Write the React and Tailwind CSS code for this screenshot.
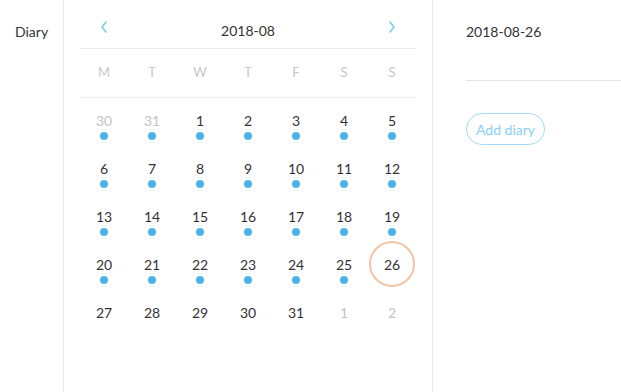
import React from 'react';

const weeks = [
  [['30', 1, 1], ['31', 1, 1], ['1', 0, 1], ['2', 0, 1], ['3', 0, 1], ['4', 0, 1], ['5', 0, 1]],
  [['6', 0, 1], ['7', 0, 1], ['8', 0, 1], ['9', 0, 1], ['10', 0, 1], ['11', 0, 1], ['12', 0, 1]],
  [['13', 0, 1], ['14', 0, 1], ['15', 0, 1], ['16', 0, 1], ['17', 0, 1], ['18', 0, 1], ['19', 0, 1]],
  [['20', 0, 1], ['21', 0, 1], ['22', 0, 1], ['23', 0, 1], ['24', 0, 1], ['25', 0, 1], ['26', 0, 0]],
  [['27', 0, 0], ['28', 0, 0], ['29', 0, 0], ['30', 0, 0], ['31', 0, 0], ['1', 1, 0], ['2', 1, 0]],
];

function Chevron({ dir }) {
  return (
    <svg width="10" height="14" viewBox="0 0 10 14" fill="none">
      <path d={dir === 'left' ? 'M7 2 L3 7 L7 12' : 'M3 2 L7 7 L3 12'} stroke="#7cc8f2" strokeWidth="1.6" strokeLinecap="round" strokeLinejoin="round" />
    </svg>
  );
}

export default function App() {
  return (
    <div className="flex w-[621px] h-[392px] bg-white text-[14px] text-[#333]" style={{ fontFamily: 'Lato, "Noto Sans", sans-serif' }}>
      <div className="w-[64px] shrink-0 border-r border-[#e8e8e8] pl-[15px] pt-[21px]">Diary</div>

      <div className="w-[369px] shrink-0 border-r border-[#e8e8e8] px-[16px]">
        <div className="flex items-center h-[49px] border-b border-[#ececec]">
          <div className="w-[48px] flex justify-center pt-[6px]"><Chevron dir="left" /></div>
          <div className="flex-1 text-center pt-[13px]">2018-08</div>
          <div className="w-[48px] flex justify-center pt-[6px]"><Chevron dir="right" /></div>
        </div>
        <div className="grid grid-cols-7 h-[49px] items-center border-b border-[#ececec] text-[#c8c8c8] text-[13px]">
          {['M', 'T', 'W', 'T', 'F', 'S', 'S'].map((d, i) => (
            <div key={i} className="text-center">{d}</div>
          ))}
        </div>
        <div className="-mt-[2px]">
          {weeks.map((w, wi) => (
            <div key={wi} className="grid grid-cols-7 h-[48px]">
              {w.map(([n, muted, dot], di) => {
                const selected = wi === 3 && di === 6;
                return (
                  <div key={di} className="relative flex justify-center items-center">
                    <div className={'flex items-center justify-center w-[46px] h-[46px] rounded-full ' + (selected ? 'border-2 border-[#f4c3a8]' : '')}>
                      <span className={muted ? 'text-[#c4c4c4]' : 'text-[#333]'}>{n}</span>
                    </div>
                    {dot ? <span className="absolute top-[36px] left-1/2 -ml-[4px] w-[8px] h-[8px] rounded-full bg-[#4cb3ec]"></span> : null}
                  </div>
                );
              })}
            </div>
          ))}
        </div>
      </div>

      <div className="flex-1 pl-[33px] pt-[21px]">
        <div className="h-[60px] border-b border-[#e6e6e6]">2018-08-26</div>
        <div className="pt-[32px]">
          <button className="h-[32px] px-[9px] rounded-full border border-[#a5dbf8] text-[#88cff6] text-[14px]">Add diary</button>
        </div>
      </div>
    </div>
  );
}
